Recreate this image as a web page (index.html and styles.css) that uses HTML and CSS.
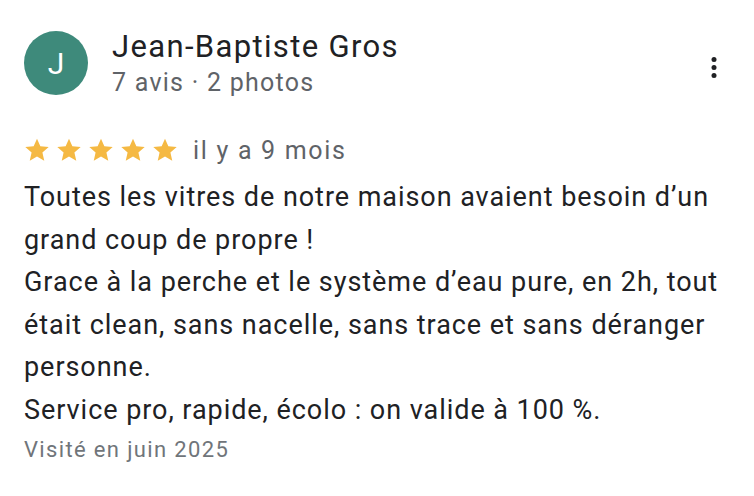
FILE: index.html
```html
<!DOCTYPE html>
<html lang="fr">
<head>
<meta charset="utf-8">
<link rel="stylesheet" href="styles.css">
</head>
<body>
<div class="review">
  <div class="header">
    <div class="avatar">J</div>
    <div class="who">
      <div class="name">Jean-Baptiste Gros</div>
      <div class="meta">7 avis · 2 photos</div>
    </div>
    <button class="menu" aria-label="Plus d'options">
      <svg width="6" height="22" viewBox="0 0 6 22"><circle cx="3" cy="2.5" r="2.5" fill="#202124"/><circle cx="3" cy="10.5" r="2.5" fill="#202124"/><circle cx="3" cy="18.5" r="2.5" fill="#202124"/></svg>
    </button>
  </div>
  <div class="rating">
    <div class="stars">
      <svg class="star" viewBox="0 0 24 24"><path d="M12 1.5l3.1 7.1 7.7.7-5.8 5.1 1.7 7.6L12 18l-6.7 4 1.7-7.6-5.8-5.1 7.7-.7z"/></svg>
      <svg class="star" viewBox="0 0 24 24"><path d="M12 1.5l3.1 7.1 7.7.7-5.8 5.1 1.7 7.6L12 18l-6.7 4 1.7-7.6-5.8-5.1 7.7-.7z"/></svg>
      <svg class="star" viewBox="0 0 24 24"><path d="M12 1.5l3.1 7.1 7.7.7-5.8 5.1 1.7 7.6L12 18l-6.7 4 1.7-7.6-5.8-5.1 7.7-.7z"/></svg>
      <svg class="star" viewBox="0 0 24 24"><path d="M12 1.5l3.1 7.1 7.7.7-5.8 5.1 1.7 7.6L12 18l-6.7 4 1.7-7.6-5.8-5.1 7.7-.7z"/></svg>
      <svg class="star" viewBox="0 0 24 24"><path d="M12 1.5l3.1 7.1 7.7.7-5.8 5.1 1.7 7.6L12 18l-6.7 4 1.7-7.6-5.8-5.1 7.7-.7z"/></svg>
    </div>
    <span class="when">il y a 9 mois</span>
  </div>
  <p class="text">Toutes les vitres de notre maison avaient besoin d’un grand coup de propre !<br>Grace à la perche et le système d’eau pure, en 2h, tout était clean, sans nacelle, sans trace et sans déranger personne.<br>Service pro, rapide, écolo : on valide à 100 %.</p>
  <div class="visited">Visité en juin 2025</div>
</div>
</body>
</html>
```

FILE: styles.css
```css
html, body {
  margin: 0;
  padding: 0;
  background: #ffffff;
}
body {
  font-family: Roboto, "Liberation Sans", Arial, sans-serif;
  color: #202124;
}
.review {
  padding: 25px 10px 0 24px;
}
.header {
  display: flex;
  align-items: center;
  gap: 24px;
}
.avatar {
  width: 64px;
  height: 64px;
  border-radius: 50%;
  background: #3e8a7b;
  color: #ffffff;
  font-size: 30px;
  display: flex;
  align-items: center;
  justify-content: center;
  flex: none;
}
.who {
  flex: 1;
  margin-top: 4px;
}
.name {
  font-size: 31px;
  line-height: 36px;
  letter-spacing: 1.35px;
  color: #202124;
}
.meta {
  font-size: 25px;
  line-height: 36px;
  letter-spacing: 1.25px;
  color: #5f6368;
}
.menu {
  align-self: flex-start;
  background: none;
  border: 0;
  padding: 0;
  margin: 32px 27px 0 0;
  width: 6px;
  display: flex;
}
.rating {
  display: flex;
  align-items: center;
  margin-top: 34px;
  height: 30px;
}
.stars {
  display: flex;
  gap: 6px;
}
.star {
  width: 26px;
  height: 26px;
  fill: #f5b943;
}
.when {
  margin-left: 15px;
  font-size: 25px;
  letter-spacing: 1.7px;
  color: #5f6368;
}
.text {
  margin: 11px 0 0 0;
  font-size: 27px;
  line-height: 42.5px;
  letter-spacing: 0.95px;
  color: #202124;
}
.visited {
  margin-top: 4px;
  font-size: 22px;
  line-height: 30px;
  letter-spacing: 1.35px;
  color: #70757a;
}
```
